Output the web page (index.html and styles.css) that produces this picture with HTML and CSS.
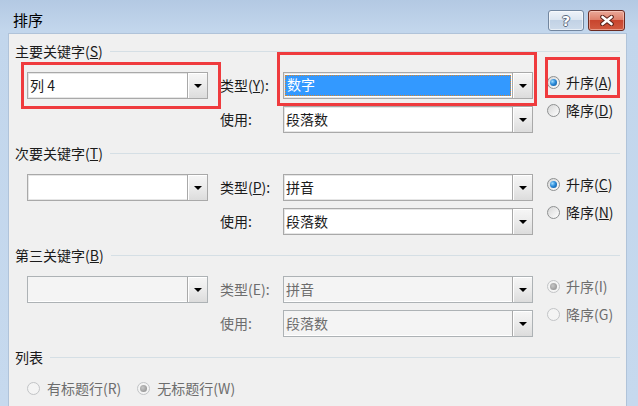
FILE: index.html
```html
<!DOCTYPE html>
<html lang="zh-CN">
<head>
<meta charset="utf-8">
<title>排序</title>
<link rel="stylesheet" href="styles.css">
</head>
<body>
<div class="window">
  <div class="titlebar">
    <span class="title">排序</span>
    <div class="caps">
      <div class="cap help"><span class="qmark">?</span></div>
      <div class="cap close">
        <svg width="16" height="11" viewBox="0 0 16 11">
          <path d="M3.5 2 L12.5 9 M12.5 2 L3.5 9" stroke="#5a2219" stroke-width="4.6" stroke-linecap="round" fill="none"/>
          <path d="M3.5 2 L12.5 9 M12.5 2 L3.5 9" stroke="#ffffff" stroke-width="2.6" stroke-linecap="round" fill="none"/>
        </svg>
      </div>
    </div>
  </div>

  <div class="client">
    <section class="group">
      <div class="group-head"><span>主要关键字(<u>S</u>)</span><i class="rule"></i></div>
      <div class="group-body">
        <div class="combo key r1"><span class="val">列 4</span><span class="arrow"></span></div>
        <span class="lbl r1">类型(<u>Y</u>):</span>
        <div class="combo wide r1"><span class="val sel">数字</span><span class="arrow"></span></div>
        <span class="lbl r2">使用:</span>
        <div class="combo wide r2"><span class="val">段落数</span><span class="arrow"></span></div>
        <div class="radios">
          <div class="radio"><i class="dot on"></i>升序(<u>A</u>)</div>
          <div class="radio"><i class="dot"></i>降序(<u>D</u>)</div>
        </div>
      </div>
    </section>

    <section class="group">
      <div class="group-head"><span>次要关键字(<u>T</u>)</span><i class="rule"></i></div>
      <div class="group-body">
        <div class="combo key r1"><span class="val"></span><span class="arrow"></span></div>
        <span class="lbl r1">类型(<u>P</u>):</span>
        <div class="combo wide r1"><span class="val">拼音</span><span class="arrow"></span></div>
        <span class="lbl r2">使用:</span>
        <div class="combo wide r2"><span class="val">段落数</span><span class="arrow"></span></div>
        <div class="radios">
          <div class="radio"><i class="dot on"></i>升序(<u>C</u>)</div>
          <div class="radio"><i class="dot"></i>降序(<u>N</u>)</div>
        </div>
      </div>
    </section>

    <section class="group disabled">
      <div class="group-head"><span class="enabled-text">第三关键字(<u>B</u>)</span><i class="rule"></i></div>
      <div class="group-body">
        <div class="combo key r1"><span class="val"></span><span class="arrow"></span></div>
        <span class="lbl r1">类型(E):</span>
        <div class="combo wide r1"><span class="val">拼音</span><span class="arrow"></span></div>
        <span class="lbl r2">使用:</span>
        <div class="combo wide r2"><span class="val">段落数</span><span class="arrow"></span></div>
        <div class="radios">
          <div class="radio"><i class="dot on"></i>升序(I)</div>
          <div class="radio"><i class="dot"></i>降序(G)</div>
        </div>
      </div>
    </section>

    <section class="group disabled">
      <div class="group-head"><span class="enabled-text">列表</span><i class="rule"></i></div>
      <div class="list-radios">
        <div class="radio"><i class="dot"></i>有标题行(R)</div>
        <div class="radio"><i class="dot on"></i>无标题行(W)</div>
      </div>
    </section>
  </div>

  <div class="mark m1"></div>
  <div class="mark m2"></div>
  <div class="mark m3"></div>
</div>
</body>
</html>
```

FILE: styles.css
```css
html, body {
  margin: 0;
  padding: 0;
}

body {
  width: 638px;
  height: 406px;
  overflow: hidden;
  font-family: "Noto Sans CJK SC", "Microsoft YaHei", "Noto Sans", sans-serif;
  font-size: 14px;
  color: #1b1b1b;
}

.window {
  position: relative;
  height: 406px;
  box-sizing: border-box;
  padding: 0 11px 0 8px;
  background: linear-gradient(to bottom, #b3c9e3 0px, #c2d6ec 30px, #c6d9ee 100%);
  display: flex;
  flex-direction: column;
}

/* title bar */
.titlebar {
  flex: none;
  height: 33px;
  display: flex;
  justify-content: space-between;
  align-items: flex-start;
  padding: 0 2px 0 5px;
}

.title {
  font-size: 15px;
  line-height: 20px;
  margin-top: 10px;
  color: #000;
}

.caps {
  display: flex;
  gap: 4px;
  margin-top: 10px;
}

.cap {
  height: 21px;
  box-sizing: border-box;
  border-radius: 3px;
  display: flex;
  align-items: center;
  justify-content: center;
}

.help {
  width: 36px;
  border: 1px solid #72869f;
  background: linear-gradient(to bottom, #eef3f9 0%, #dce6f1 45%, #c2d2e5 50%, #cddbeb 100%);
  box-shadow: inset 0 0 0 1px rgba(255, 255, 255, 0.55);
}

.qmark {
  font-family: "DejaVu Sans", sans-serif;
  font-weight: bold;
  font-size: 14px;
  line-height: 16px;
  color: #fff;
  text-shadow: 1px 0 0 #5b6b80, -1px 0 0 #5b6b80, 0 1px 0 #5b6b80, 0 -1px 0 #5b6b80;
}

.close {
  width: 37px;
  border: 1px solid #6b2a21;
  background: linear-gradient(to bottom, #eaa999 0%, #de816c 45%, #c8452e 50%, #d15a40 100%);
  box-shadow: inset 0 0 0 1px rgba(255, 220, 210, 0.5);
}

.close svg {
  display: block;
}

/* client area */
.client {
  flex: 1;
  background: #f0f0f0;
  border: 1px solid #b0c3d9;
  border-bottom: none;
  padding: 7px 6px 0 6px;
}

.group {
  margin-bottom: 10px;
}

.group-head {
  display: flex;
  align-items: center;
  height: 20px;
  line-height: 20px;
}

.rule {
  flex: 1;
  height: 0;
  border-top: 1px solid #d5dfe5;
  margin-left: 7px;
}

.group-body {
  display: grid;
  grid-template-columns: 193px 63px 264px auto;
  grid-template-rows: 27px 27px;
  row-gap: 7px;
  padding-left: 12px;
  margin-top: 11px;
}

.r1 { grid-row: 1; }
.r2 { grid-row: 2; }

.key { grid-column: 1; width: 181px; }
.lbl { grid-column: 2; line-height: 27px; white-space: nowrap; }
.wide { grid-column: 3; width: 250px; }

/* combo boxes */
.combo {
  display: flex;
  height: 27px;
  box-sizing: border-box;
  border: 1px solid #a9a9a9;
  background: #fff;
  box-shadow: inset 0 0 0 1px #e6e6e6;
}

.combo .val {
  flex: 1;
  line-height: 25px;
  padding-left: 2px;
  white-space: nowrap;
}

.combo .val.sel {
  margin: 2px 1px 2px 1px;
  padding-left: 2px;
  line-height: 19px;
  background: #3399ff;
  color: #fff;
  outline: 1px dotted #d8862e;
  outline-offset: -1px;
}

.combo .arrow {
  flex: none;
  width: 19px;
  border-left: 1px solid #a9a9a9;
  background: linear-gradient(to bottom, #f6f6f6 0%, #ebebeb 50%, #dcdcdc 100%);
  box-shadow: inset 1px 1px 0 #fff;
  display: flex;
  align-items: center;
  justify-content: center;
}

.combo .arrow::after {
  content: "";
  width: 0;
  height: 0;
  border-left: 4px solid transparent;
  border-right: 4px solid transparent;
  border-top: 4px solid #000;
  margin-top: 1px;
}

/* radios */
.radios {
  grid-column: 4;
  grid-row: 1 / span 2;
  display: flex;
  flex-direction: column;
  gap: 8px;
}

.radio {
  display: flex;
  align-items: center;
  height: 20px;
  line-height: 20px;
  white-space: nowrap;
}

.dot {
  position: relative;
  flex: none;
  width: 13px;
  height: 13px;
  box-sizing: border-box;
  border-radius: 50%;
  border: 1px solid #8e9091;
  background: linear-gradient(to bottom right, #d6d6d6, #ffffff);
  margin-right: 6px;
}

.dot.on::after {
  content: "";
  position: absolute;
  left: 2px;
  top: 2px;
  width: 7px;
  height: 7px;
  border-radius: 50%;
  background: radial-gradient(circle at 35% 35%, #9fdcff 0%, #2a8ad8 45%, #0c4f94 100%);
}

.list-radios {
  display: flex;
  gap: 16px;
  padding-left: 12px;
  margin-top: 11px;
}

.list-radios .dot {
  margin-right: 7px;
}

/* disabled state */
.disabled .group-body,
.disabled .list-radios {
  color: #6d6d6d;
}

.disabled .enabled-text {
  color: #1b1b1b;
}

.disabled .combo {
  border-color: #adb2b5;
  background: #f4f4f4;
  box-shadow: inset 0 -1px 0 #fff;
}

.disabled .dot {
  border-color: #c2c4c6;
  background: #f4f4f4;
}

.disabled .dot.on::after {
  background: radial-gradient(circle at 40% 40%, #c8c8c8 0%, #9a9a9a 70%, #8a8a8a 100%);
}

/* red annotation boxes */
.mark {
  position: absolute;
  box-sizing: border-box;
  border: 3px solid #ef3b3e;
}

.m1 { left: 21px; top: 62px; width: 200px; height: 47px; }
.m2 { left: 277px; top: 52px; width: 260px; height: 54px; }
.m3 { left: 545px; top: 57px; width: 75px; height: 41px; }
```
